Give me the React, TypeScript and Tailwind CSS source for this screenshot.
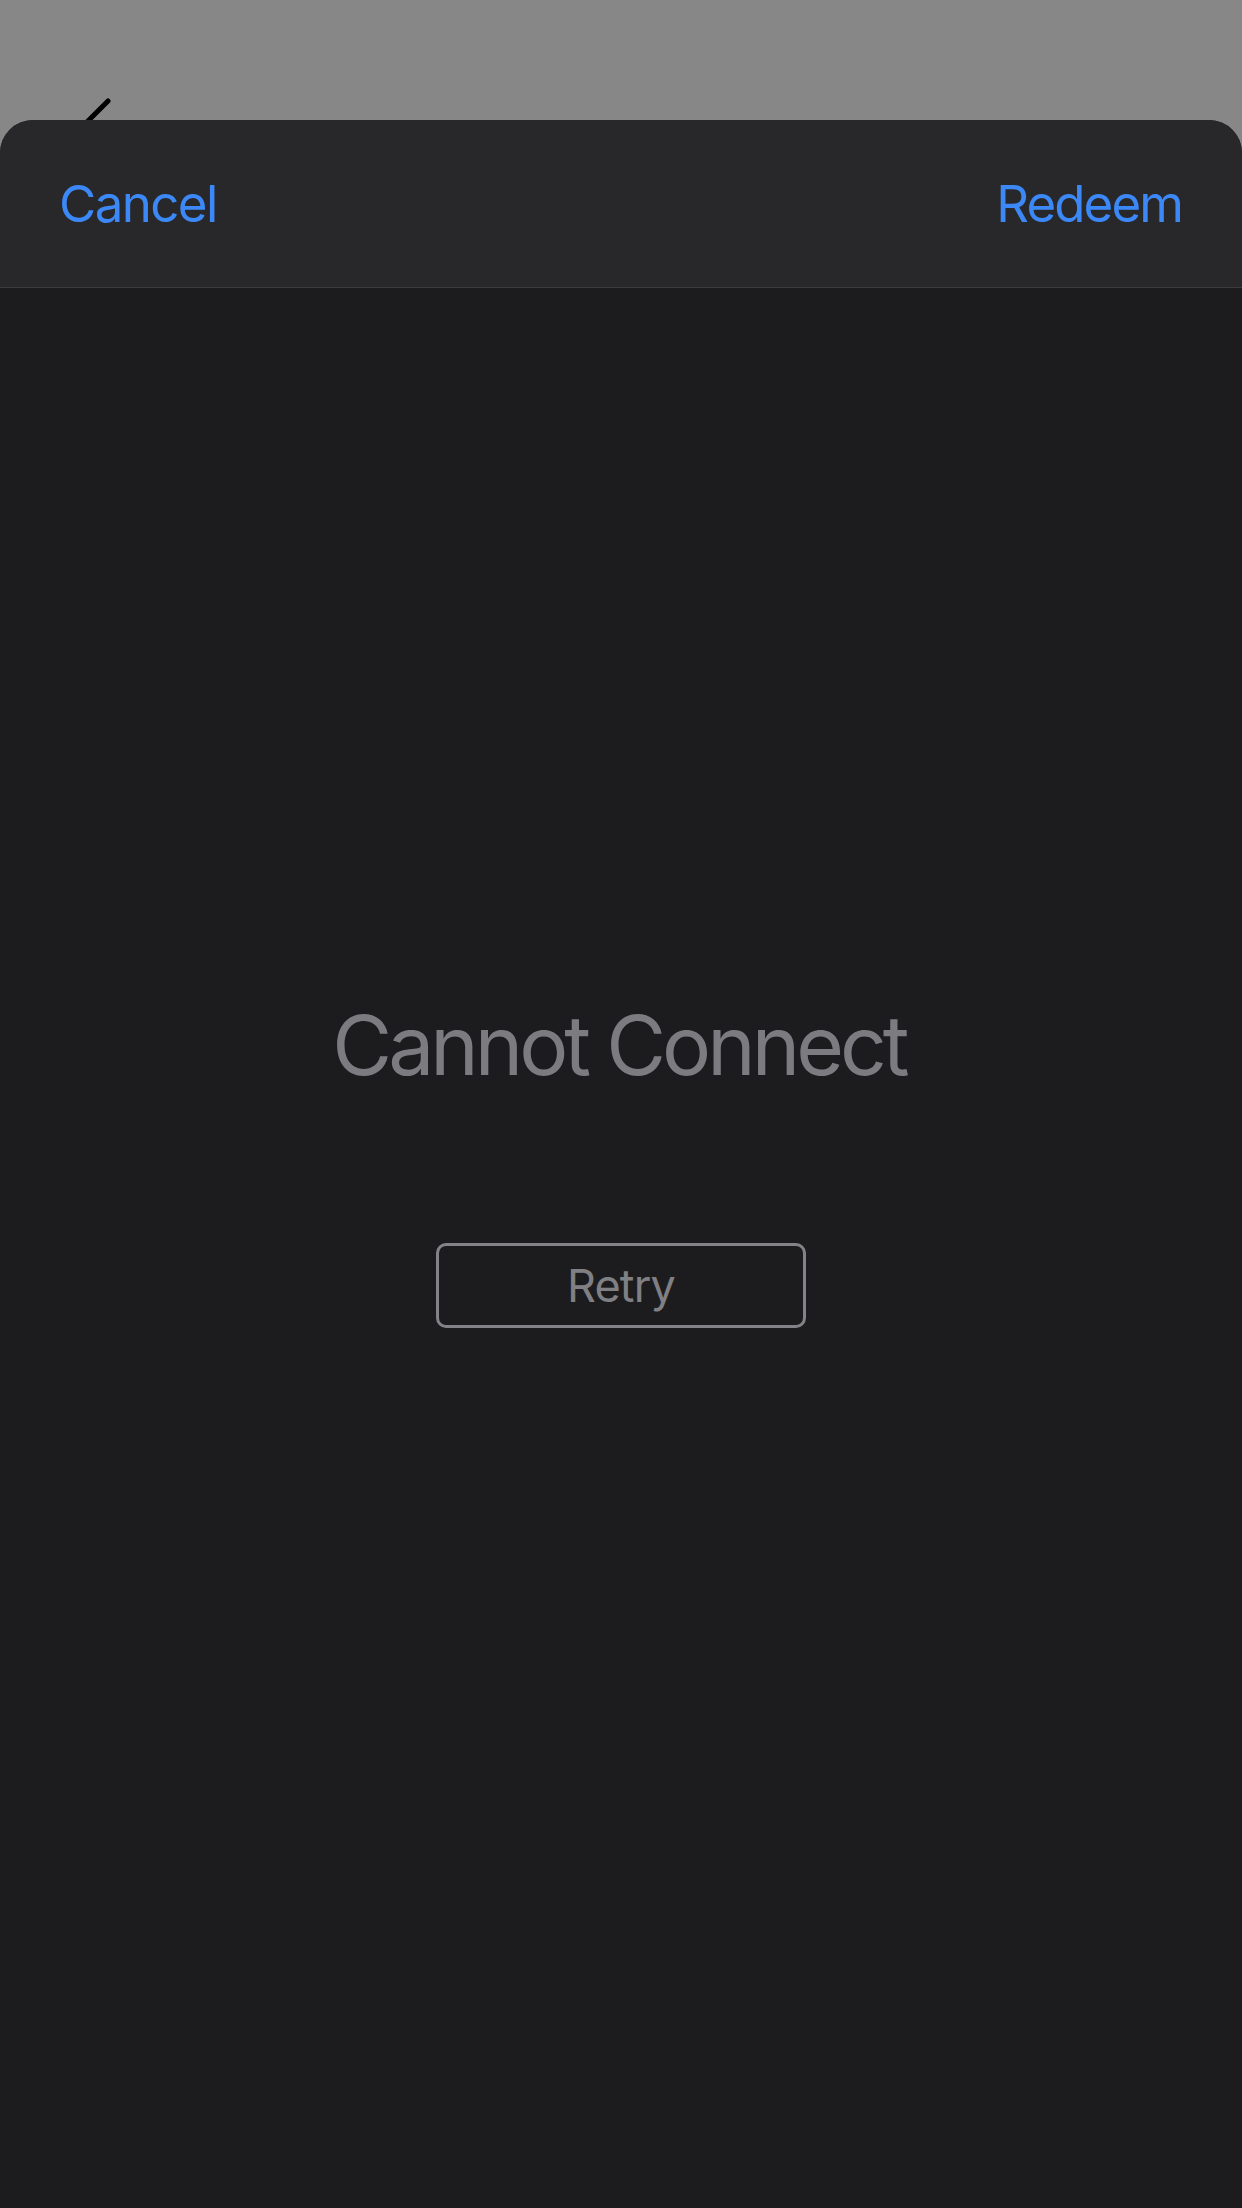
import React from "react";

export default function App() {
  return (
    <div
      className="w-[1242px] h-[2208px] bg-[#878787] flex flex-col overflow-hidden"
      style={{ fontFamily: "Inter, 'Liberation Sans', sans-serif" }}
    >
      <div className="h-[120px] shrink-0 overflow-hidden pl-[60px] pt-[96px]">
        <svg width="60" height="80" viewBox="0 0 60 80" fill="none">
          <polyline
            points="48,5 13,40 48,75"
            stroke="#000"
            strokeWidth="5"
            strokeLinecap="round"
            strokeLinejoin="round"
          />
        </svg>
      </div>
      <div className="flex-1 flex flex-col rounded-t-[33px] bg-[#1c1c1e] overflow-hidden">
        <div className="h-[168px] shrink-0 bg-[#28282a] flex items-center justify-between pl-[59px] pr-[60px] border-b border-[#3c3c3f]">
          <span className="text-[51px] leading-none tracking-[-1.6px] text-[#3b88f6]">Cancel</span>
          <span className="text-[51px] leading-none tracking-[-1.9px] text-[#3b88f6]">Redeem</span>
        </div>
        <div className="flex flex-col items-center pt-[717px]">
          <div className="text-[82px] leading-none tracking-[-4px] pr-[4px] text-[#7c7c80]">Cannot Connect</div>
          <button className="mt-[156px] w-[370px] h-[85px] rounded-[10px] border-[3px] border-[#838387] flex items-center justify-center">
            <span className="text-[45px] leading-none tracking-[-0.8px] text-[#808084]">Retry</span>
          </button>
        </div>
      </div>
    </div>
  );
}
